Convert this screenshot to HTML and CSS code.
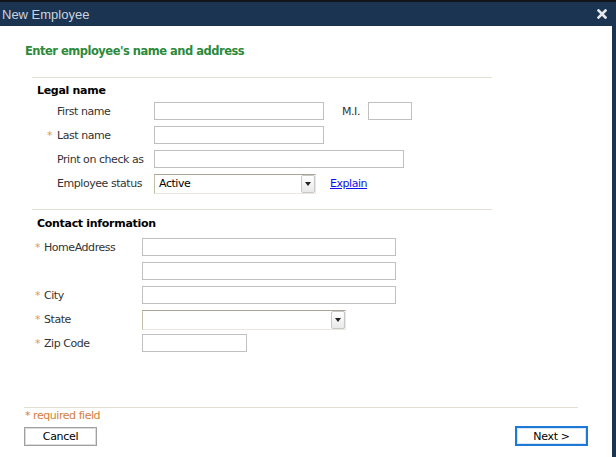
FILE: index.html
```html
<!DOCTYPE html>
<html>
<head>
<meta charset="utf-8">
<title>New Employee</title>
<link rel="stylesheet" href="styles.css">
</head>
<body>
<div class="dialog">
  <div class="titlebar">
    <span class="title">New Employee</span>
    <svg class="close" width="10" height="10" viewBox="0 0 10 10"><path d="M1.5 1.5 L8.5 8.5 M8.5 1.5 L1.5 8.5" stroke="#e4e8ec" stroke-width="2.6" stroke-linecap="square"/></svg>
  </div>
  <div class="body">
    <div class="main">
      <h1 class="heading">Enter employee's name and address</h1>

      <section class="section legal">
        <h2 class="section-title">Legal name</h2>
        <div class="row">
          <label class="label"><span class="req"></span>First name</label>
          <span class="input w170"></span>
          <label class="mi-label">M.I.</label>
          <span class="input w44"></span>
        </div>
        <div class="row">
          <label class="label"><span class="req">*</span>Last name</label>
          <span class="input w170"></span>
        </div>
        <div class="row">
          <label class="label"><span class="req"></span>Print on check as</label>
          <span class="input w250"></span>
        </div>
        <div class="row">
          <label class="label"><span class="req"></span>Employee status</label>
          <span class="select w162"><span class="select-value">Active</span><span class="select-btn"><span class="arrow"></span></span></span>
          <a class="explain" href="#">Explain</a>
        </div>
      </section>

      <section class="section contact">
        <h2 class="section-title">Contact information</h2>
        <div class="row">
          <label class="label"><span class="req">*</span>HomeAddress</label>
          <span class="input w254"></span>
        </div>
        <div class="row">
          <label class="label"></label>
          <span class="input w254"></span>
        </div>
        <div class="row">
          <label class="label"><span class="req">*</span>City</label>
          <span class="input w254"></span>
        </div>
        <div class="row">
          <label class="label"><span class="req">*</span>State</label>
          <span class="select w204"><span class="select-value"></span><span class="select-btn"><span class="arrow"></span></span></span>
        </div>
        <div class="row">
          <label class="label"><span class="req">*</span>Zip Code</label>
          <span class="input w105"></span>
        </div>
      </section>
    </div>

    <div class="footer">
      <div class="required-note">* required field</div>
      <div class="buttons">
        <button class="btn cancel">Cancel</button>
        <button class="btn next">Next &gt;</button>
      </div>
    </div>
  </div>
</div>
</body>
</html>
```

FILE: styles.css
```css
html, body {
  margin: 0;
  padding: 0;
  background: #ffffff;
}

.dialog {
  width: 616px;
  height: 457px;
  display: flex;
  flex-direction: column;
  font-family: "DejaVu Sans", Tahoma, sans-serif;
  font-size: 11px;
  letter-spacing: -0.45px;
  color: #333333;
}

.titlebar {
  height: 24px;
  border-top: 2px solid #111418;
  background: #1b3452;
  display: flex;
  align-items: center;
  justify-content: space-between;
  padding: 0 9px 0 2px;
  letter-spacing: 0;
}

.title {
  font-family: "Liberation Sans", Arial, sans-serif;
  font-size: 13px;
  color: #c9d3de;
}

.close {
  display: block;
}

.body {
  flex: 1;
  display: flex;
  flex-direction: column;
  background: #ffffff;
  border-right: 4px solid #1b3452;
}

.main {
  padding-left: 24px;
  padding-top: 17px;
}

.heading {
  margin: 0 0 0 1px;
  font-size: 11.5px;
  letter-spacing: -0.5px;
  line-height: 16px;
  font-weight: bold;
  color: #2c8a3a;
}

.section {
  margin-left: 8px;
  width: 460px;
  border-top: 1px solid #e3ded2;
}

.legal {
  margin-top: 18px;
}

.contact {
  margin-top: 14px;
}

.section-title {
  margin: 0;
  padding: 5px 0 0 5px;
  font-size: 11px;
  letter-spacing: -0.3px;
  line-height: 16px;
  font-weight: bold;
  color: #000000;
}

.contact .section-title {
  padding-top: 6px;
  margin-bottom: 3px;
}

.row {
  height: 24px;
  display: flex;
  align-items: center;
}

.label {
  display: flex;
  align-items: center;
  box-sizing: border-box;
  flex: none;
  padding-top: 1px;
}

.legal .label {
  width: 122px;
  padding-left: 15px;
}

.contact .label {
  width: 110px;
  padding-left: 3px;
}

.req {
  display: inline-block;
  width: 10px;
  color: #e39a3a;
}

.contact .req {
  width: 9px;
}

.input {
  display: block;
  box-sizing: border-box;
  height: 18px;
  border: 1px solid #c0c0c0;
  background: #ffffff;
  flex: none;
}

.w170 { width: 170px; }
.w44 { width: 44px; }
.w250 { width: 250px; }
.w254 { width: 254px; }
.w105 { width: 105px; }
.w162 { width: 162px; }
.w204 { width: 204px; }

.mi-label {
  margin-left: 18px;
  width: 26px;
  padding-top: 1px;
}

.select {
  display: flex;
  box-sizing: border-box;
  height: 20px;
  margin-top: 1px;
  border-top: 1px solid #aaa492;
  border-left: 1px solid #c4bea8;
  border-bottom: 1px solid #ebe7dc;
  border-right: 1px solid #ebe7dc;
  background: #ffffff;
  flex: none;
}

.select-value {
  flex: 1;
  padding-left: 4px;
  line-height: 18px;
  color: #000000;
}

.select-btn {
  width: 14px;
  box-sizing: border-box;
  border: 1px solid #c8c8c8;
  border-radius: 2px;
  background: linear-gradient(#ffffff, #e9e9e9);
  display: flex;
  align-items: center;
  justify-content: center;
}

.arrow {
  width: 0;
  height: 0;
  border-left: 3.5px solid transparent;
  border-right: 3.5px solid transparent;
  border-top: 4px solid #222222;
}

.explain {
  margin-left: 14px;
  color: #1010ee;
  text-decoration: underline;
}

.footer {
  margin-top: auto;
  padding: 0 0 11px 24px;
}

.required-note {
  width: 553px;
  border-top: 1px solid #e3ded2;
  line-height: 14px;
  padding-top: 1px;
  color: #d5803a;
  padding-left: 1px;
}

.buttons {
  margin-top: 3px;
  width: 564px;
  display: flex;
  justify-content: space-between;
  align-items: center;
}

.btn {
  font-family: "DejaVu Sans", Tahoma, sans-serif;
  font-size: 11px;
  letter-spacing: -0.3px;
  color: #000000;
  background: #ffffff;
  box-sizing: border-box;
  width: 73px;
  padding: 0;
  cursor: pointer;
}

.cancel {
  height: 19px;
  border: 1px solid #a0a0a0;
  box-shadow: inset 0 0 0 1px #dcdcdc;
}

.next {
  height: 20px;
  border: 2px solid #1c7ad6;
  box-shadow: inset 0 0 0 1px #d8e4f0;
}
```
